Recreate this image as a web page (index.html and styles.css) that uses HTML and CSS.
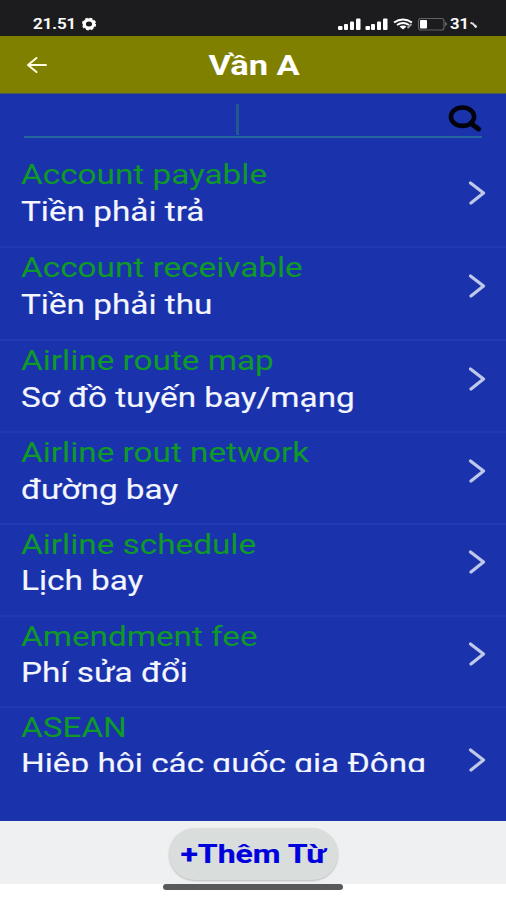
FILE: index.html
```html
<!DOCTYPE html>
<html lang="vi">
<head>
<meta charset="utf-8">
<title>Vần A</title>
<link rel="stylesheet" href="styles.css">
</head>
<body>
<div class="phone">
  <div class="status">
    <span class="clock"><span class="wide">21.51</span></span>
    <svg class="gear" width="16" height="14" viewBox="0 0 16 14"><ellipse cx="8" cy="7" rx="4.700" ry="4.100" fill="none" stroke="#fff" stroke-width="3.200"/><ellipse cx="8" cy="7" rx="6.200" ry="5.500" fill="none" stroke="#fff" stroke-width="1.800" stroke-dasharray="2.600 2"/></svg>
    <svg class="signals" width="146" height="16" viewBox="0 0 146 16">
      <g fill="#fff">
        <rect x="0" y="10" width="4.500" height="4" rx="1"/><rect x="6" y="8" width="4" height="6" rx="1"/><rect x="12" y="5.500" width="4" height="8.500" rx="1"/><rect x="18" y="2.500" width="4.500" height="11.500" rx="1"/>
        <rect x="27.500" y="10" width="4.500" height="4" rx="1"/><rect x="33" y="8" width="4" height="6" rx="1"/><rect x="39" y="5.500" width="4" height="8.500" rx="1"/><rect x="45" y="2.500" width="4.500" height="11.500" rx="1"/>
        <rect x="82" y="4" width="7" height="8.500" rx="1"/>
      </g>
      <g fill="none" stroke="#fff" stroke-width="2">
        <path d="M56 6.500Q65 .500 74 6.500M59 9Q65 5 71 9"/>
      </g>
      <path d="M61.500 10.500Q65 8.500 68.500 10.500L65 13.500z" fill="#fff"/>
      <path d="M69.500 12l4-4" stroke="#999" stroke-width="2"/>
      <path d="M83 2.500h20.500q2.500 0 2.500 2.500v6.500q0 2.500-2.500 2.500H83q-2.500 0-2.500-2.500V5q0-2.500 2.500-2.500z" fill="none" stroke="#606163" stroke-width="1.200"/>
      <path d="M107 5.500l2.500 2.500-2.500 2.500z" fill="#606163"/>
    </svg>
    <span class="battery"><span class="wide">31</span></span>
    <svg class="pct" width="8" height="8" viewBox="0 0 8 8"><path d="M.500 1.500l2.500 1.500M2.500 2l3.500 4.500M5 4l1.500 2.500" stroke="#ddd" stroke-width="2" fill="none"/></svg>
  </div>
  <header class="appbar">
    <svg class="back" width="22" height="18" viewBox="0 0 22 18"><path d="M20 9H2M10.500 2L2 9l8.500 7" fill="none" stroke="#fffde0" stroke-width="2" stroke-linecap="round" stroke-linejoin="round"/></svg>
    <h1><span class="title">Vần A</span></h1>
  </header>
  <div class="search">
    <div class="field"><i class="caret"></i>
      <svg class="glass" width="34" height="28" viewBox="0 0 34 28"><ellipse cx="14.500" cy="11.700" rx="11.600" ry="9.200" fill="none" stroke="#02030c" stroke-width="4.600"/><path d="M23 18.500l7.500 5.500" stroke="#02030c" stroke-width="5" stroke-linecap="round"/></svg>
    </div>
  </div>
  <main class="list">
    <div class="row"><div class="words"><p class="en">Account payable</p><p class="vi">Tiền phải trả</p></div><svg class="chev" width="18" height="24" viewBox="0 0 18 24"><path d="M2.500 2L15.500 12 3 22"/></svg></div>
    <div class="row"><div class="words"><p class="en">Account receivable</p><p class="vi">Tiền phải thu</p></div><svg class="chev" width="18" height="24" viewBox="0 0 18 24"><path d="M2.500 2L15.500 12 3 22"/></svg></div>
    <div class="row"><div class="words"><p class="en">Airline route map</p><p class="vi">Sơ đồ tuyến bay/mạng</p></div><svg class="chev" width="18" height="24" viewBox="0 0 18 24"><path d="M2.500 2L15.500 12 3 22"/></svg></div>
    <div class="row"><div class="words"><p class="en">Airline rout network</p><p class="vi">đường bay</p></div><svg class="chev" width="18" height="24" viewBox="0 0 18 24"><path d="M2.500 2L15.500 12 3 22"/></svg></div>
    <div class="row close"><div class="words"><p class="en">Airline schedule</p><p class="vi">Lịch bay</p></div><svg class="chev" width="18" height="24" viewBox="0 0 18 24"><path d="M2.500 2L15.500 12 3 22"/></svg></div>
    <div class="row close"><div class="words"><p class="en">Amendment fee</p><p class="vi">Phí sửa đổi</p></div><svg class="chev" width="18" height="24" viewBox="0 0 18 24"><path d="M2.500 2L15.500 12 3 22"/></svg></div>
    <div class="row close tall"><div class="words"><p class="en">ASEAN</p><p class="vi">Hiệp hội các quốc gia Đông</p></div><svg class="chev" width="18" height="24" viewBox="0 0 18 24"><path d="M2.500 2L15.500 12 3 22"/></svg></div>
  </main>
  <footer class="footer"><button class="add"><span class="addtext">+Thêm Từ</span></button></footer>
  <div class="home"></div>
</div>
</body>
</html>
```

FILE: styles.css
```css
* { box-sizing: border-box; }
body { margin: 0; background: #fff; font-family: Roboto, "Liberation Sans", sans-serif; }
p, h1 { margin: 0; }
svg { display: block; flex: none; }
.phone { width: 506px; height: 900px; display: flex; flex-direction: column; background: #1a33ad; overflow: hidden; }

.status { height: 36px; flex: none; background: #1c1c1e; display: flex; align-items: center; padding: 11px 0 0 33px; color: #fff; font-size: 15px; font-weight: 500; line-height: 16px; }
.wide { display: inline-block; transform: scaleX(1.12); transform-origin: 0 50%; -webkit-text-stroke: 0.2px #fff; }
.clock { width: 48px; }
.clock .wide { transform: scaleX(1.13); }
.signals { margin-left: 241px; }
.battery { width: 20px; margin-left: -34px; }
.pct { margin: 3px 0 0 0; }

.appbar { height: 58px; flex: none; background: #808000; border-bottom: 1px solid #4c5a57; display: flex; align-items: center; padding-left: 26px; }
.back { margin-right: -48px; }
h1 { flex: 1; text-align: center; font-size: 28px; font-weight: 700; color: #fff; line-height: 32px; padding: 2px 0 0 2px; }
.title { display: inline-block; transform: scaleX(1.23); }

.search { height: 61px; flex: none; padding: 0 24px; }
.field { height: 44px; border-bottom: 2px solid #25669b; display: flex; align-items: center; justify-content: space-between; padding-top: 8px; }
.caret { width: 3px; height: 31px; margin-left: 212px; background: #20598f; }

.list { height: 617px; flex: none; overflow: hidden; display: grid; grid-template-rows: 93px 93px 92px 92px 92px 91px 107px; }
.row { display: flex; justify-content: space-between; align-items: flex-start; border-bottom: 2px solid #203ab1; padding: 1px 20px 0 21px; }
.words { white-space: nowrap; transform: scaleX(1.189); transform-origin: 0 0; font-size: 28px; line-height: 37px; }
.en { color: #0f9a28; }
.vi { color: #f4f6ff; -webkit-text-stroke: 0.15px #f4f6ff; }
.chev { margin-top: 24.5px; }
.chev path { fill: none; stroke: #bfc8e8; stroke-width: 3.2; stroke-linecap: round; stroke-linejoin: round; }
.close .vi { margin-top: -1px; }
.close .chev { margin-top: 24px; }
.tall .chev { margin-top: 39px; }

.footer { height: 63px; flex: none; margin-top: 49px; background: #eff0f2; display: flex; justify-content: center; align-items: flex-start; padding-top: 7px; }
.add { width: 169px; height: 52px; border: 0; border-radius: 26px; background: #d9dddc; box-shadow: 0 1px 2px #b9bcbc; padding: 0; font: 700 26px/30px Roboto, sans-serif; color: #0000dc; }
.addtext { display: inline-block; transform: scaleX(1.23); white-space: nowrap; -webkit-text-stroke: 0.2px #0000dc; }
.home { height: 16px; flex: none; background: #fff; }
.home::before { content: ""; display: block; width: 180px; height: 6px; margin: 0 auto; border-radius: 3px; background: #58595b; }
```
